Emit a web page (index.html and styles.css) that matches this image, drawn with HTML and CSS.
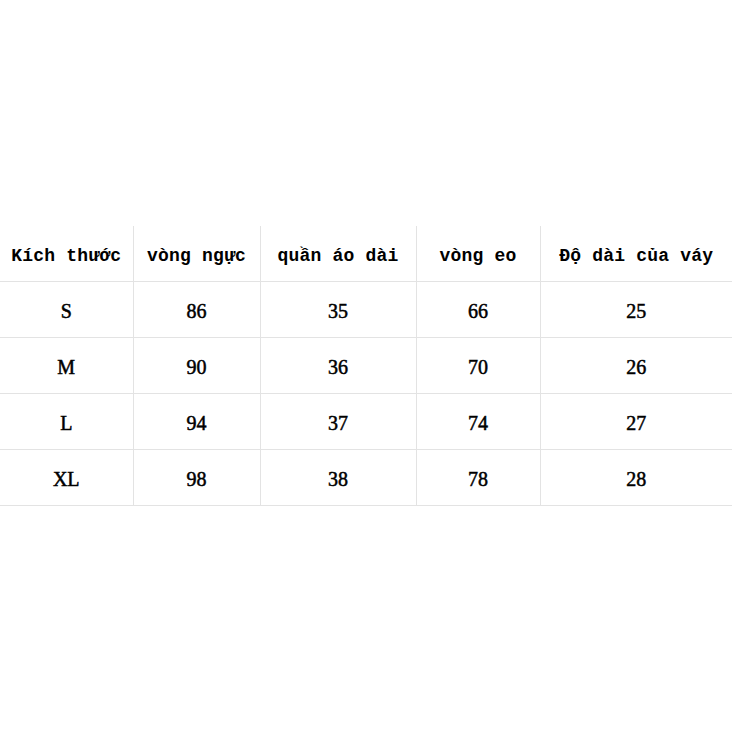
FILE: index.html
```html
<!DOCTYPE html>
<html lang="vi">
<head>
<meta charset="utf-8">
<title>Bảng kích thước</title>
<link rel="stylesheet" href="styles.css">
</head>
<body>
<main class="page">
  <table class="size-table">
    <colgroup>
      <col class="c1"><col class="c2"><col class="c3"><col class="c4"><col class="c5">
    </colgroup>
    <thead>
      <tr><th>Kích thước</th><th>vòng ngực</th><th>quần áo dài</th><th>vòng eo</th><th>Độ dài của váy</th></tr>
    </thead>
    <tbody>
      <tr><td>S</td><td>86</td><td>35</td><td>66</td><td>25</td></tr>
      <tr><td>M</td><td>90</td><td>36</td><td>70</td><td>26</td></tr>
      <tr><td>L</td><td>94</td><td>37</td><td>74</td><td>27</td></tr>
      <tr><td>XL</td><td>98</td><td>38</td><td>78</td><td>28</td></tr>
    </tbody>
  </table>
</main>
</body>
</html>
```
FILE: styles.css
```css
html, body {
  margin: 0;
  padding: 0;
  background: #ffffff;
}
.page {
  height: 732px;
  display: flex;
  align-items: center;
}
.size-table {
  width: 732px;
  border-collapse: collapse;
  table-layout: fixed;
  color: #000;
}
.c1 { width: 133px; }
.c2 { width: 127px; }
.c3 { width: 156px; }
.c4 { width: 124px; }
.c5 { width: 192px; }
.size-table th,
.size-table td {
  text-align: center;
  vertical-align: middle;
  padding: 4px 0 0;
  border-left: 1px solid #e3e3e3;
  border-bottom: 1px solid #e3e3e3;
}
.size-table th:first-child,
.size-table td:first-child {
  border-left: none;
}
.size-table th {
  height: 51px;
  font-family: "Liberation Mono", monospace;
  font-weight: bold;
  font-size: 18px;
  letter-spacing: 0.2px;
}
.size-table td {
  height: 51px;
  font-family: "Liberation Serif", serif;
  font-weight: normal;
  font-size: 20px;
  -webkit-text-stroke: 0.5px #000;
}
```
